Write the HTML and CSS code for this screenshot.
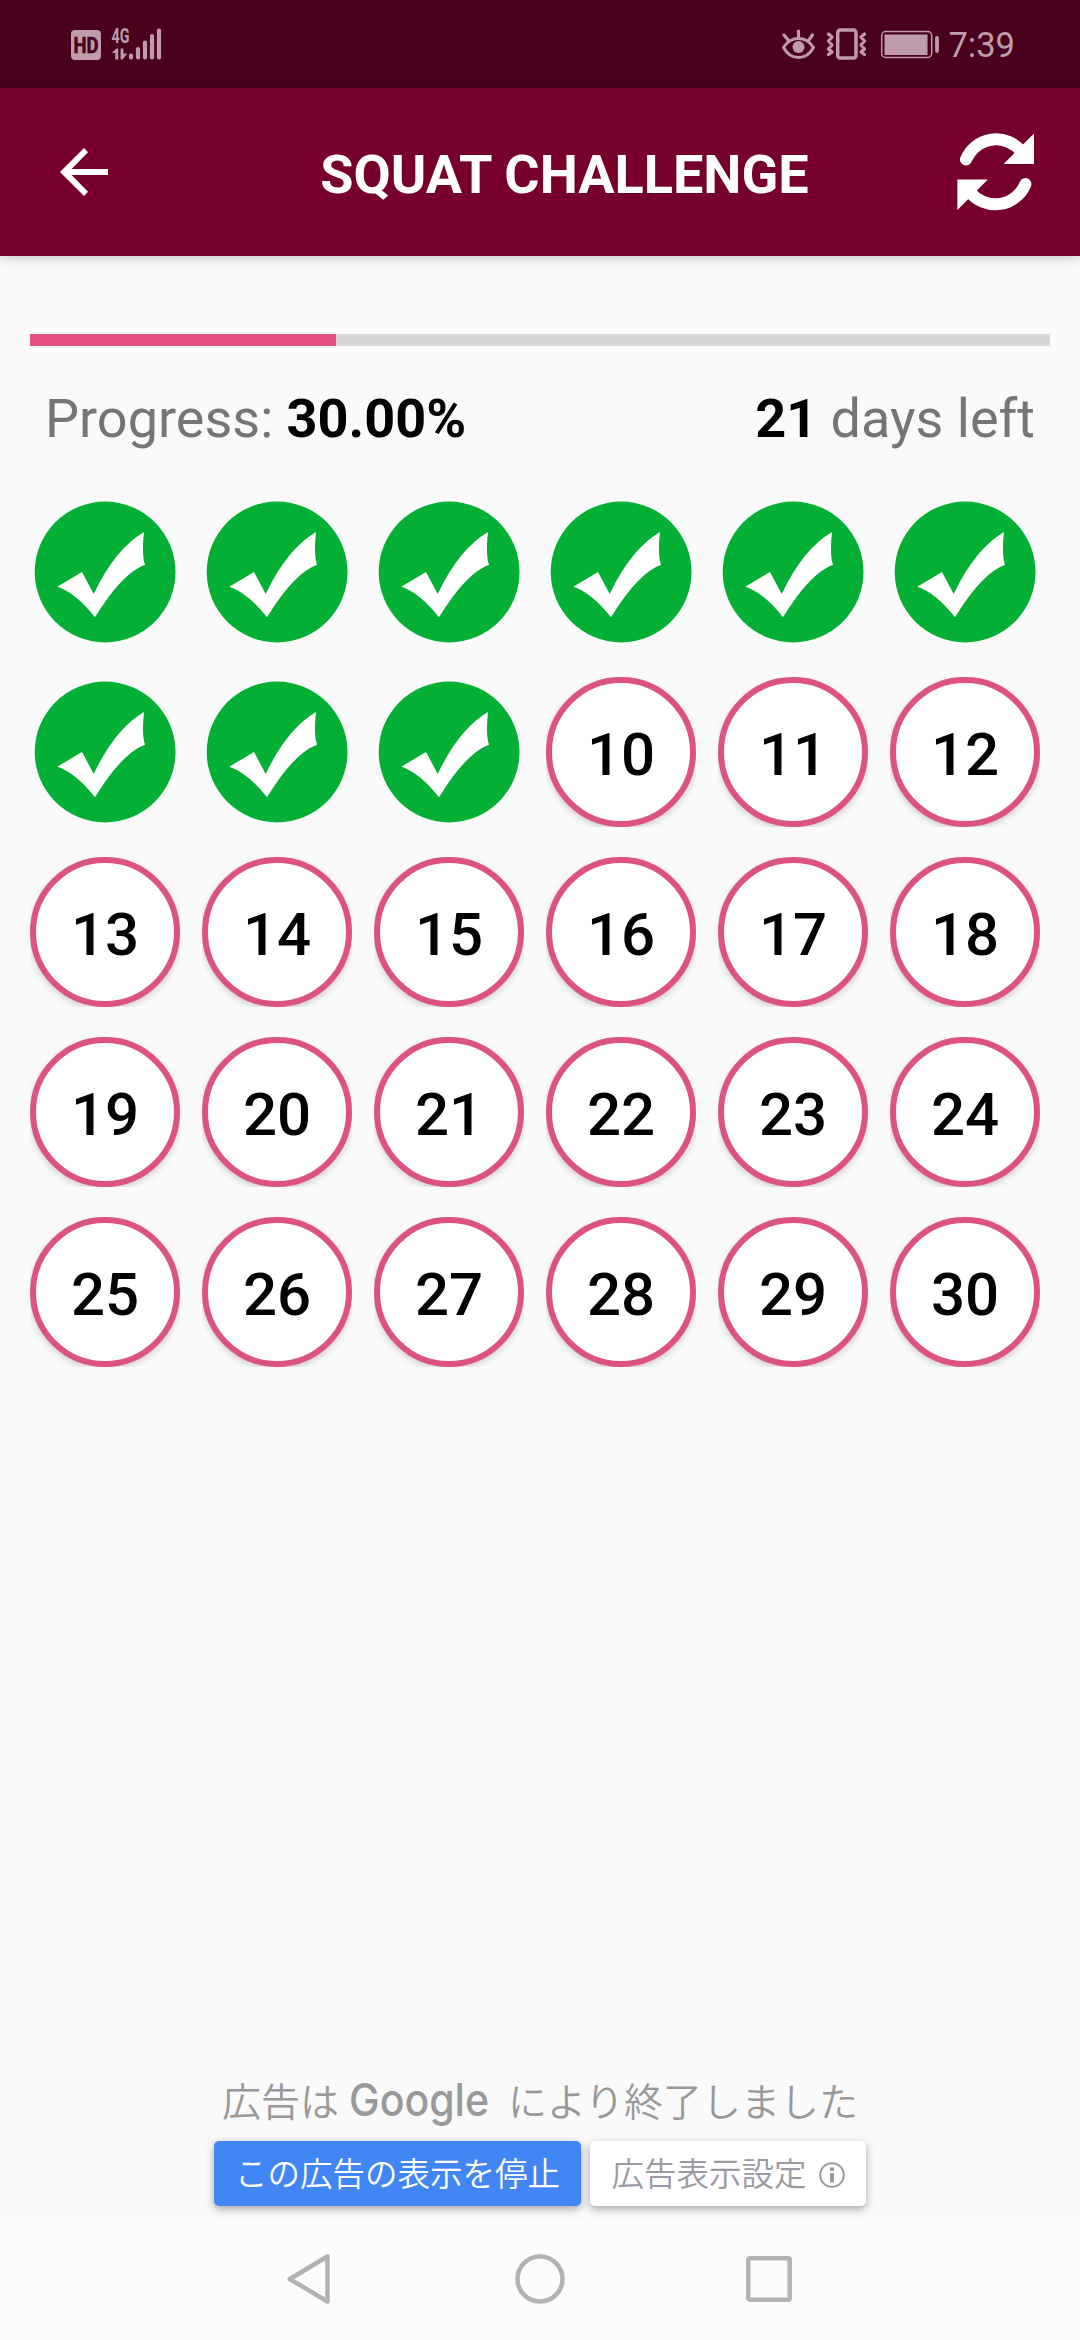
FILE: index.html
```html
<!DOCTYPE html>
<html lang="en">
<head>
<meta charset="utf-8">
<title>Squat Challenge</title>
<link rel="stylesheet" href="styles.css">
</head>
<body>
<svg class="defs" width="0" height="0">
  <symbol id="done" viewBox="0 0 150 150">
    <circle cx="75.1" cy="75" r="70.4" fill="#03af35"/>
    <path fill="#fff" d="M27.3 89.7L52 75L63.7 97Q85 52 114 35Q111.5 58 115 67.7Q92 76 65 120.3Q46 96 27.3 89.7z"/>
  </symbol>
</svg>
<div class="screen">
  <div class="status">
    <svg class="status-left" width="92" height="44" viewBox="70 18 92 44">
      <rect x="71" y="30" width="30" height="30" rx="4" fill="#bf9bab"/>
      <text class="hd" x="73.5" y="52.5" textLength="25" lengthAdjust="spacingAndGlyphs">HD</text>
      <text class="net" x="111.5" y="42.5" textLength="18" lengthAdjust="spacingAndGlyphs">4G</text>
      <path d="M111.800 53L116.500 48.500H118.200V59.500H115.300V53zM120.600 48.500H123.400V53.500H127.300L122.500 59.500H120.600z" fill="#bf9bab"/>
      <g stroke="#bf9bab" stroke-width="4.200" stroke-linecap="round"><path d="M131 55.500V57.500M138 49V57.500M145 42.500V57.500M152 36V57.500M159 30.500V57.500"/></g>
    </svg>
    <div class="status-right">
      <svg width="160" height="44" viewBox="780 18 160 44" fill="none" stroke="#bf9bab">
        <path stroke-width="3" d="M783.500 47.500Q789 38.500 798.500 38.500T813.500 47.500Q808 57.500 798.500 57.500T783.500 47.500z"/>
        <path stroke-width="3.200" stroke-linecap="round" d="M798.500 31V38M784 35L788.500 40.500M812.500 35L808.500 40.500"/>
        <circle cx="798.500" cy="47" r="6" fill="#bf9bab" stroke="none"/>
        <rect x="837.700" y="30" width="18.300" height="28" rx="2.500" stroke-width="3.500"/>
        <path stroke-width="3.300" stroke-linejoin="round" stroke-linecap="round" d="M828.500 34L832 37L828.500 41L832 45L828.500 49L832 52L828.500 54.500M864.500 34L861 37L864.500 41L861 45L864.500 49L861 52L864.500 54.500"/>
        <rect x="881.700" y="31.500" width="50" height="26" rx="4" stroke-width="1.500"/>
        <rect x="884.500" y="34.500" width="43" height="20.500" fill="#bf9bab" stroke="none"/>
        <path stroke-width="3.800" stroke-linecap="round" d="M937 38V51"/>
      </svg>
      <span class="time">7:39</span>
    </div>
  </div>
  <header class="bar">
    <svg width="48" height="48" viewBox="0 0 48 48"><path d="M48 21V27H11.500L28 43.700L24 48L0 24L24 0L28 4.300L11.500 21z" fill="#fff"/></svg>
    <h1 class="title">SQUAT CHALLENGE</h1>
    <svg width="78" height="78" viewBox="957 133 78 78">
      <g id="half"><path d="M966 159.500A32.500 32.500 0 0 1 1021 151" fill="none" stroke="#fff" stroke-width="12" stroke-linecap="round"/><path d="M1034 133.500V164H1003.500z" fill="#fff"/></g>
      <use href="#half" transform="rotate(180 995.700 171.800)"/>
    </svg>
  </header>
  <main class="main">
    <div class="track"><div class="fill" style="width:30%"></div></div>
    <div class="stats"><span>Progress: <b>30.00%</b></span><span><b>21</b> days left</span></div>
    <div class="days">
      <svg class="day"><use href="#done"/></svg><svg class="day"><use href="#done"/></svg><svg class="day"><use href="#done"/></svg><svg class="day"><use href="#done"/></svg><svg class="day"><use href="#done"/></svg><svg class="day"><use href="#done"/></svg>
      <svg class="day"><use href="#done"/></svg><svg class="day"><use href="#done"/></svg><svg class="day"><use href="#done"/></svg>
      <div class="day"><div class="ring">10</div></div><div class="day"><div class="ring">11</div></div><div class="day"><div class="ring">12</div></div>
      <div class="day"><div class="ring">13</div></div><div class="day"><div class="ring">14</div></div><div class="day"><div class="ring">15</div></div><div class="day"><div class="ring">16</div></div><div class="day"><div class="ring">17</div></div><div class="day"><div class="ring">18</div></div>
      <div class="day"><div class="ring">19</div></div><div class="day"><div class="ring">20</div></div><div class="day"><div class="ring">21</div></div><div class="day"><div class="ring">22</div></div><div class="day"><div class="ring">23</div></div><div class="day"><div class="ring">24</div></div>
      <div class="day"><div class="ring">25</div></div><div class="day"><div class="ring">26</div></div><div class="day"><div class="ring">27</div></div><div class="day"><div class="ring">28</div></div><div class="day"><div class="ring">29</div></div><div class="day"><div class="ring">30</div></div>
    </div>
  </main>
  <section class="ad" lang="ja">
    <div class="closed"><span>広告は</span><svg class="logo" width="142" height="66" viewBox="0 0 142 66"><text x="0" y="46.500" textLength="140" lengthAdjust="spacingAndGlyphs">Google</text></svg><span>により終了しました</span></div>
    <div class="actions">
      <div class="btn stop">この広告の表示を停止</div>
      <div class="btn why">広告表示設定<svg width="26" height="26" viewBox="0 0 26 26"><circle cx="13" cy="13" r="11.800" fill="none" stroke="#999" stroke-width="2"/><circle cx="13" cy="7.300" r="2.100" fill="#999"/><path d="M13 11V20.500" stroke="#999" stroke-width="3.800"/></svg></div>
    </div>
  </section>
  <nav class="nav">
    <svg width="44" height="50" viewBox="0 0 44 50"><path d="M40.500 2.500V47.500L2.800 25z"/></svg>
    <svg width="50" height="50" viewBox="0 0 50 50"><circle cx="25" cy="25" r="22.500"/></svg>
    <svg width="46" height="46" viewBox="0 0 46 46"><rect x="2.300" y="2.300" width="41.400" height="41.400" rx="1.500"/></svg>
  </nav>
</div>
</body>
</html>
```
FILE: styles.css
```css
* { box-sizing: border-box; }
body { margin: 0; background: #fafafa; font-family: Roboto, sans-serif; }
svg { display: block; flex: none; }
.defs { position: absolute; }
.screen { width: 1080px; height: 2340px; display: flex; flex-direction: column; overflow: hidden; }
.status { height: 88px; background: #48001c; display: flex; justify-content: space-between; padding: 18px 65px 0 70px; color: #bf9bab; }
.status-right { display: flex; gap: 8px; }
.time { margin-top: 8px; font-size: 34.500px; line-height: 38px; }
.hd { font: 700 22px Roboto, sans-serif; fill: #48001c; stroke: #48001c; stroke-width: .6px; }
.net { font: 700 20px Roboto, sans-serif; fill: #bf9bab; }
.bar { height: 168px; background: #76002b; display: flex; align-items: center; justify-content: space-between; padding: 0 45px 0 60px; box-shadow: 0 2px 12px rgba(0,0,0,.2); }
.title { margin: 6px 0 0 64px; font-size: 54px; font-weight: 700; line-height: 64px; color: #fff; white-space: nowrap; }
.main { flex: 1; padding: 78px 30px 0; }
.track { height: 12px; background: #d6d6d6; }
.fill { height: 100%; background: #e45083; }
.stats { display: flex; justify-content: space-between; margin-top: 41px; padding: 0 15px; font-size: 54px; line-height: 64px; color: #757575; }
.stats b { color: #000; }
.days { display: grid; grid-template-columns: repeat(6, 150px); gap: 30px 22px; margin-top: 46px; }
.day { width: 150px; height: 150px; overflow: hidden; }
.ring { width: 150px; height: 150px; border: 6px solid #dc5383; border-radius: 50%; background: #fff; display: flex; align-items: center; justify-content: center; padding-top: 4px; font-size: 60px; font-weight: 500; color: #000; box-shadow: 0 3px 7px rgba(0,0,0,.17); }
.ad { height: 150px; font-family: "Noto Sans CJK JP", sans-serif; color: #999; }
.closed { height: 73px; display: flex; align-items: flex-start; justify-content: center; font-size: 39px; font-weight: 350; line-height: 60px; white-space: nowrap; }
.closed span { margin-top: 1px; }
.logo { margin: 1px 17px 0 10px; }
.logo text { font: 500 45px Inter, sans-serif; fill: #999; }
.actions { display: flex; justify-content: center; gap: 9px; }
.btn { height: 65px; display: flex; align-items: center; justify-content: center; border-radius: 5px; padding-bottom: 4px; font-size: 32.500px; font-weight: 350; white-space: nowrap; box-shadow: 0 3px 8px rgba(0,0,0,.35); }
.stop { width: 367px; background: #4285f4; color: #fff; }
.why { width: 276px; background: #fff; gap: 12px; color: #9a9aa2; }
.why svg { margin-top: 6px; }
.nav { height: 122px; background: #fcfcfc; display: flex; align-items: center; padding-left: 287px; z-index: 1; }
.nav svg { fill: none; stroke: #b2b2b2; stroke-width: 4.500; stroke-linejoin: round; }
.nav svg:nth-child(2) { margin-left: 184px; }
.nav svg:nth-child(3) { margin-left: 181px; }
```
